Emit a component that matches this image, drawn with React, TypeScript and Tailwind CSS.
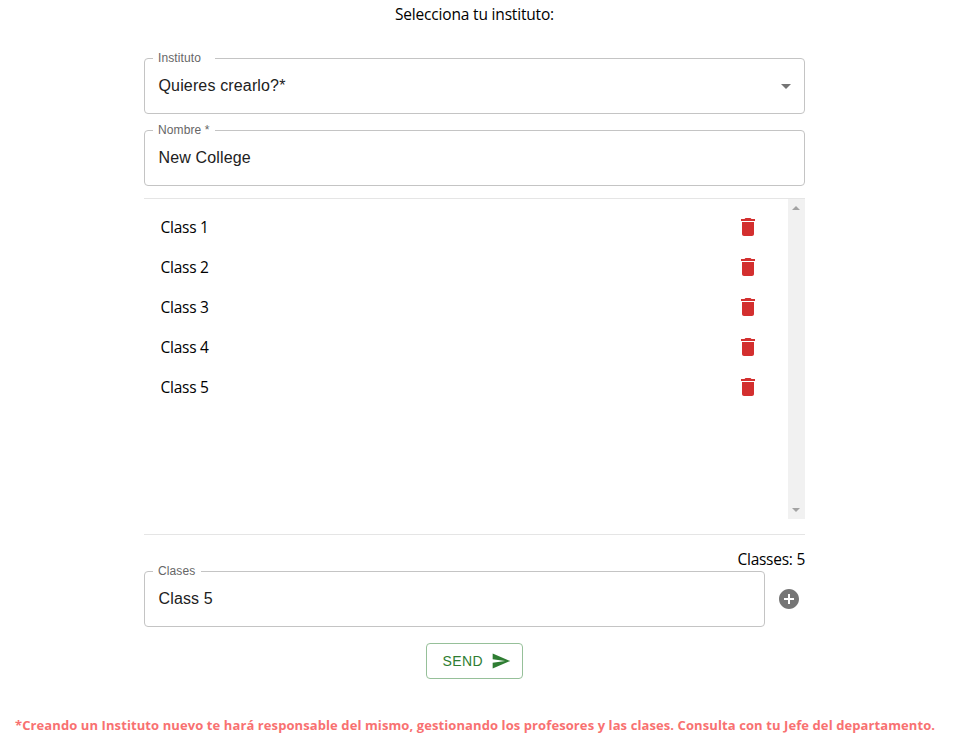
import React from "react";

const segoe = "font-['Segoe_UI','Open_Sans','Noto_Sans',sans-serif]";
const arial = "font-['Liberation_Sans',Arial,sans-serif]";

function Field({
  label,
  value,
  legendWidth,
  className = "",
  children,
}: {
  label: string;
  value: string;
  legendWidth: string;
  className?: string;
  children?: React.ReactNode;
}) {
  return (
    <fieldset className={`h-[62px] min-w-0 rounded-[4px] border border-[#c4c4c4] px-2 ${arial} ${className}`}>
      <legend
        className={`h-[13px] whitespace-nowrap px-[5px] text-[12px] leading-[13px] tracking-[0.12px] text-[#666] ${legendWidth}`}
      >
        {label}
      </legend>
      <div className="flex h-[42px] items-center justify-between pl-[5.5px] text-[16px] leading-[23px] tracking-[0.15px] text-[#212121]">
        <span className="pb-[2px]">{value}</span>
        {children}
      </div>
    </fieldset>
  );
}

function Trash() {
  return (
    <svg viewBox="0 0 24 24" className="size-6" fill="#d32f2f">
      <path d="M6 19c0 1.1.9 2 2 2h8c1.1 0 2-.9 2-2V7H6v12zM19 4h-3.5l-1-1h-5l-1 1H5v2h14V4z" />
    </svg>
  );
}

const classes = ["Class 1", "Class 2", "Class 3", "Class 4", "Class 5"];

export default function App() {
  return (
    <main className={`h-[750px] w-[956px] overflow-hidden bg-white text-[15.5px] text-black ${segoe}`}>
      <p className="h-[52px] pt-[2px] pr-[7px] text-center leading-6">
        <span className="tracking-[-0.18px]">Selecciona tu instituto:</span>
      </p>
      <div className="ml-36 flex w-[661px] flex-col">
        <Field label="Instituto" value="Quieres crearlo?*" legendWidth="w-[62px]">
          <svg viewBox="0 0 24 24" className="-mr-[2px] size-6" fill="#757575">
            <path d="m7 10 5 5 5-5z" />
          </svg>
        </Field>
        <Field label="Nombre *" value="New College" legendWidth="w-[62px]" className="mt-[10px]" />

        <div className="mt-3 flex h-[321px] border-t border-[#e5e5e5]">
          <ul className="flex-1 pt-2">
            {classes.map((name) => (
              <li key={name} className="flex h-10 items-center justify-between pl-[16.5px] pr-7">
                <span className="pt-[2px] tracking-[-0.26px]">{name}</span>
                <Trash />
              </li>
            ))}
          </ul>
          <div className="flex w-[17px] flex-col items-start justify-between bg-[#f1f1f1] py-[7px] pl-1">
            <svg viewBox="0 0 8 4" className="h-1 w-2" fill="#a3a3a3">
              <path d="M0 4h8L4 0z" />
            </svg>
            <svg viewBox="0 0 8 4" className="h-1 w-2" fill="#a3a3a3">
              <path d="M0 0h8L4 4z" />
            </svg>
          </div>
        </div>

        <div className="mt-[15px] h-[31px] border-t border-[#e5e5e5] pt-[12px] text-right leading-6">
          <span className="tracking-[-0.26px]">Classes: 5</span>
        </div>
        <div className="flex">
          <Field label="Clases" value="Class 5" legendWidth="w-[48px]" className="w-[621px]" />
          <button className="mt-[22px] ml-3 size-6" aria-label="Añadir">
            <svg viewBox="0 0 24 24" className="size-6" fill="#757575">
              <path d="M12 2C6.48 2 2 6.48 2 12s4.48 10 10 10 10-4.48 10-10S17.52 2 12 2zm5 11h-4v4h-2v-4H7v-2h4V7h2v4h4v2z" />
            </svg>
          </button>
        </div>
        <button
          className={`mt-4 ml-[282px] flex h-9 w-[97px] items-center rounded-[4px] border border-[#96c099] pl-[15.5px] text-[14px] tracking-[0.4px] text-[#2e7d32] ${arial}`}
        >
          SEND
          <svg viewBox="0 0 24 24" className="ml-[7.5px] size-5 shrink-0" fill="#2e7d32">
            <path d="M2.01 21 23 12 2.01 3 2 10l15 2-15 2z" />
          </svg>
        </button>
      </div>
      <p className="mt-[36px] pl-[15px] text-[13px] leading-5 font-bold tracking-[0.093px] whitespace-nowrap text-[#f87171]">
        *Creando un Instituto nuevo te hará responsable del mismo, gestionando los profesores y las clases. Consulta con
        tu Jefe del departamento.
      </p>
    </main>
  );
}
